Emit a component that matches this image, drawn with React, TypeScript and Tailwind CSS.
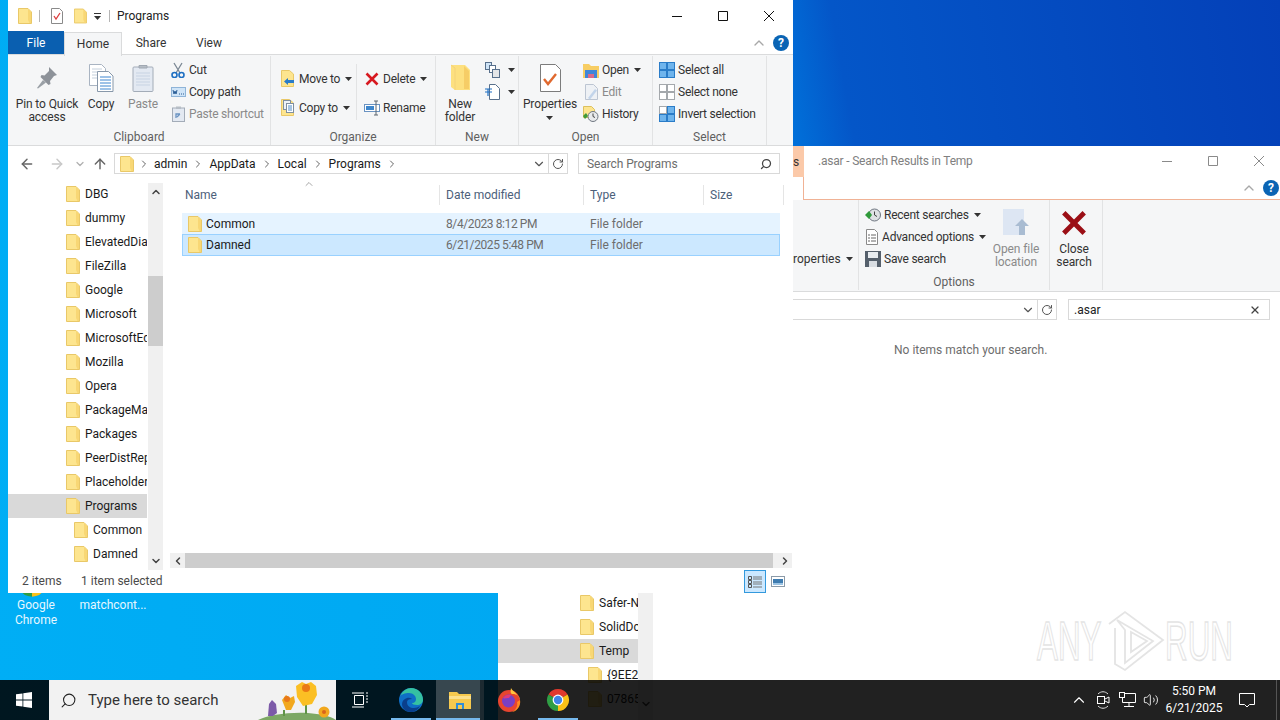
import type { ReactNode } from 'react'
import { ArrowLeft, ArrowRight, ArrowUp, ChevronDown, ChevronRight, ChevronUp, RotateCw, Search, Volume2, X } from 'lucide-react'

const Folder = ({ className = 'w-[14px] h-4' }: { className?: string }) => (
    <svg viewBox="0 0 14 16" className={`shrink-0 ${className}`}>
        <path d="M.5.5h9.5l3.5 3.5v11.5H.5z" fill="#fde58f" stroke="#e9c868" />
        <path d="M10 1l3 3v11h-1.500L10 12z" fill="#f8d775" />
    </svg>
)

const Caret = ({ className = '' }: { className?: string }) => (
    <svg viewBox="0 0 7 4" className={`w-[7px] h-1 shrink-0 ${className}`}>
        <path d="M0 0h7L3.500 4z" fill="#333" />
    </svg>
)

const PinIcon = () => (
    <svg viewBox="0 0 22 24" className="w-[22px] h-6">
        <path d="M13 1l8 8-3 1-4 5 .5 3-2 1-8-8 1-2 3 .5 4.500-4.500z" fill="#8d9299" />
        <path d="M7 14l-6 8 1 .5 8-6z" fill="#9aa0a6" />
    </svg>
)

const CopyIcon = () => (
    <svg viewBox="0 0 25 28" className="w-[25px] h-7">
        <path d="M.5.5h12l4 4v17H.5z" fill="#fff" stroke="#a9b4c2" />
        <path d="M3 5h10M3 8h10M3 11h10M3 14h10" stroke="#c5d0dc" />
        <path d="M8.500 7.500h11l4.500 4.500v15.500H8.500z" fill="#fff" stroke="#8898aa" />
        <path d="M11 13h11M11 16h11M11 19h11M11 22h11M11 25h11" stroke="#3f86d0" />
    </svg>
)

const PasteIcon = () => (
    <svg viewBox="0 0 22 28" className="w-[22px] h-7">
        <rect x="1" y="3" width="20" height="24.500" rx="1" fill="#e3e9f2" stroke="#a3acb8" />
        <path d="M4 9h14M4 12h14M4 15h14M4 18h14M4 21h14" stroke="#c7d3e3" />
        <path d="M7 4h8V1.500h-8z" fill="#b6bdc6" stroke="#a0a8b2" />
    </svg>
)

const ScissorsIcon = () => (
    <svg viewBox="0 0 14 16" className="w-[14px] h-4">
        <path d="M3 1l6 10M11 1L5 11" stroke="#7b8794" strokeWidth="1.300" fill="none" />
        <circle cx="3.500" cy="13" r="2.500" fill="none" stroke="#1e6fc2" strokeWidth="1.600" />
        <circle cx="10.500" cy="13" r="2.500" fill="none" stroke="#1e6fc2" strokeWidth="1.600" />
    </svg>
)

const CopyPathIcon = () => (
    <svg viewBox="0 0 15 10" className="w-[15px] h-[10px]">
        <rect x=".5" y=".5" width="14" height="9" fill="#cfe4f7" stroke="#8fb4d8" />
        <path d="M2 3l1 4 1-3 1 3 1-4" stroke="#2a5d96" fill="none" />
        <path d="M8 7h1M10 7h1M12 7h1" stroke="#2a5d96" />
    </svg>
)

const PasteShortcutIcon = () => (
    <svg viewBox="0 0 13 16" className="w-[13px] h-4">
        <rect x=".5" y="2" width="12" height="13.500" fill="#e3e9f2" stroke="#a3acb8" />
        <rect x="4" y=".5" width="5" height="2.500" fill="#b6bdc6" />
        <path d="M4 12V8h4M8 8l-3 3" stroke="#6a93c2" strokeWidth="1.300" fill="none" />
    </svg>
)

const MoveToIcon = () => (
    <svg viewBox="0 0 14 17" className="w-[14px] h-[17px]">
        <path d="M.5.5h8l4 3.500v12.500H.5z" fill="#fde58f" stroke="#e9c868" />
        <path d="M13 10H7V8l-4 3.500L7 15v-2h6z" fill="#2a7cc8" />
    </svg>
)

const CopyToIcon = () => (
    <svg viewBox="0 0 14 17" className="w-[14px] h-[17px]">
        <path d="M.5.5h8l4 3.500v12.500H.5z" fill="#fde58f" stroke="#e9c868" />
        <rect x="2.500" y="1.500" width="7" height="9" fill="#eef3f8" stroke="#7f8fa0" />
        <rect x="5.500" y="4.500" width="7" height="9" fill="#fff" stroke="#7f8fa0" />
        <path d="M7 7h4M7 9h4M7 11h4" stroke="#4c8ac8" />
    </svg>
)

const RedX = ({ className = 'w-[14px] h-[14px]', color = '#d71920' }: { className?: string; color?: string }) => (
    <svg viewBox="0 0 14 14" className={className}>
        <path d="M1.500 1.500l11 11M12.500 1.500l-11 11" stroke={color} strokeWidth="2.600" />
    </svg>
)

const RenameIcon = () => (
    <svg viewBox="0 0 16 16" className="w-4 h-4">
        <rect x=".5" y="4.500" width="15" height="7" fill="#fff" stroke="#6a93c2" />
        <rect x="2" y="6" width="8" height="4" fill="#3e86cc" />
        <path d="M10 1h4M12 1v14M10 15h4" stroke="#5d6670" fill="none" />
    </svg>
)

const NewFolderIcon = () => (
    <svg viewBox="0 0 21 28" className="w-[21px] h-7">
        <path d="M1 1h14l5 5v20H5l-4-3z" fill="#fde07f" />
        <path d="M14 2l5 5v18h-5z" fill="#f6cd66" />
        <path d="M1 1l4 3v22" fill="none" stroke="#f4d27a" />
    </svg>
)

const NewItemIcon = () => (
    <svg viewBox="0 0 15 16" className="w-[15px] h-4">
        <rect x=".5" y=".5" width="6" height="7" fill="#cfe4f7" stroke="#58708c" />
        <rect x="4.500" y="3.500" width="6" height="7" fill="#fff" stroke="#58708c" />
        <rect x="7.500" y="7.500" width="7" height="8" fill="#e4e6e8" stroke="#58708c" />
    </svg>
)

const EasyAccessIcon = () => (
    <svg viewBox="0 0 15 16" className="w-[15px] h-4">
        <path d="M4.500.5h6l4 4v11h-10z" fill="#fff" stroke="#58708c" />
        <path d="M0 5h7M0 8h7M3 5v7" stroke="#1e6fc2" strokeWidth="1.200" fill="none" />
    </svg>
)

const PropertiesIcon = () => (
    <svg viewBox="0 0 21 28" className="w-[21px] h-7">
        <path d="M.5.5h15l5 5v22H.5z" fill="#fff" stroke="#7c7c7c" />
        <path d="M4 15l4 5 8-10" fill="none" stroke="#e0692f" strokeWidth="2.400" />
    </svg>
)

const TitleDocIcon = () => (
    <svg viewBox="0 0 12 16" className="w-3 h-4 shrink-0">
        <path d="M.5.5h8l3 3v12H.5z" fill="#fff" stroke="#8a8a8a" />
        <path d="M3 8l2 3 4-6" fill="none" stroke="#dc3f3f" strokeWidth="1.300" />
    </svg>
)

const OpenIcon = () => (
    <svg viewBox="0 0 16 15" className="w-4 h-[15px]">
        <path d="M0 1h6l2 2h8v12H0z" fill="#f7cd63" />
        <path d="M2 7h12v8H2z" fill="#3f86d8" />
        <path d="M5 15v-4h6v4z" fill="#d96a8a" />
    </svg>
)

const EditIcon = () => (
    <svg viewBox="0 0 13 16" className="w-[13px] h-4">
        <path d="M.5.5h8l4 4v11H.5z" fill="#eef1f5" stroke="#bcc5d2" />
        <path d="M3 14l7-9 2 1.500-7 9z" fill="#c2d4ea" />
    </svg>
)

const HistoryIcon = () => (
    <svg viewBox="0 0 16 16" className="w-4 h-4">
        <path d="M.5.5h8l3 3v8h-11z" fill="#fde58f" stroke="#dcc05e" />
        <circle cx="10" cy="10.500" r="5" fill="#e8eaec" stroke="#6e7680" />
        <path d="M10 7.500v3l2 1" stroke="#444" fill="none" />
        <path d="M0 10l3-3 2 3-3 3z" fill="#3f9a3a" />
    </svg>
)

const SelectGrid = ({ filled }: { filled: boolean[] }) => (
    <svg viewBox="0 0 16 16" className="w-4 h-4">
        {[0, 1, 2, 3].map((i) => (
            <rect
                key={i}
                x={i % 2 === 0 ? 0.5 : 8.5}
                y={i < 2 ? 0.5 : 8.5}
                width="7"
                height="7"
                fill={filled[i] ? '#6fb4ec' : '#fff'}
                stroke={filled[i] ? '#2a7cc8' : '#a4a8ac'}
            />
        ))}
    </svg>
)

const ViewDetailsIcon = () => (
    <svg viewBox="0 0 16 16" className="w-4 h-4">
        <path d="M1.500 2.500h3v3h-3zM1.500 6.500h3v3h-3zM1.500 10.500h3v3h-3z" fill="none" stroke="#555" />
        <path d="M6 3h9M6 5h9M6 8h9M6 10h9M6 13h9" stroke="#777" />
    </svg>
)

const ViewTilesIcon = () => (
    <svg viewBox="0 0 14 11" className="w-[14px] h-[11px]">
        <rect x=".5" y=".5" width="13" height="10" fill="#fff" stroke="#8b9aa8" />
        <rect x="2" y="3" width="10" height="4" fill="#3f7cb0" />
        <rect x="2" y="7" width="10" height="2" fill="#9cc4e4" />
    </svg>
)

const RecentIcon = () => (
    <svg viewBox="0 0 16 14" className="w-4 h-[14px]">
        <circle cx="9.500" cy="7" r="6" fill="#dfe1e4" stroke="#6e7680" />
        <path d="M9.500 3.500V7l2.500 1.500" stroke="#444" fill="none" />
        <path d="M0 7l4-4 3 4-3 4z" fill="#2f9a3a" />
    </svg>
)

const AdvancedIcon = () => (
    <svg viewBox="0 0 12 16" className="w-3 h-4">
        <path d="M.5.5h8l3 3v12H.5z" fill="#fff" stroke="#8a8a8a" />
        <path d="M2 6h2M5 6h5M2 9h2M5 9h5M2 12h2M5 12h5" stroke="#666" />
    </svg>
)

const SaveIcon = () => (
    <svg viewBox="0 0 16 16" className="w-4 h-4">
        <path d="M0 0h16v16H0z" fill="#55606c" />
        <rect x="3" y="1" width="10" height="6" fill="#e8ecf0" />
        <rect x="4" y="10" width="8" height="6" fill="#d8dde2" />
    </svg>
)

const OpenLocationIcon = () => (
    <svg viewBox="0 0 26 28" className="w-[26px] h-7">
        <path d="M0 0h21v26H0z" fill="#dde6f3" />
        <path d="M19 10l7 7h-4v9h-6v-9h-4z" fill="#a9bcd2" />
    </svg>
)

const WindowsLogo = () => (
    <svg viewBox="0 0 16 16" className="w-4 h-4">
        <path d="M0 2.300L6.500 1.400V7.600H0zM7.300 1.300L16 0V7.600H7.300zM0 8.400H6.500V14.600L0 13.700zM7.300 8.400H16V16L7.300 14.700z" fill="#fff" />
    </svg>
)

const TaskViewIcon = () => (
    <svg viewBox="0 0 16 16" className="w-4 h-4">
        <path d="M2.500 3.500h9v9h-9z" fill="none" stroke="#fff" />
        <path d="M0 1h12M0 15h12M14 1h2M14 4h2M14 7h2M14 10h2" stroke="#fff" />
    </svg>
)

const Flowers = () => (
    <svg viewBox="0 0 78 40" className="absolute right-0 top-0 w-[78px] h-10">
        <path d="M0 40c10-5 30-8 50-7 12 1 22 3 28 7z" fill="#7da864" />
        <path d="M48 24v10M26 30v6" stroke="#5f9447" strokeWidth="2" />
        <path d="M10 36l1-12 3-4 4 4 1 9-4 3z" fill="#7c5aa8" />
        <path d="M24 20l4-5 4 3 4-2 1 6-4 8h-5z" fill="#f2a81d" />
        <path d="M38 6l6-4 4 2 5-2 5 4 1 9-5 9-9 2-6-9z" fill="#fbbf24" />
        <circle cx="48" cy="8" r="4" fill="#ea7a14" />
        <circle cx="29" cy="19" r="3" fill="#e8781a" />
        <circle cx="66" cy="32" r="5.500" fill="#f2a81d" />
        <circle cx="66" cy="32" r="2" fill="#d8641a" />
    </svg>
)

const EdgeIcon = () => (
    <svg viewBox="0 0 24 24" className="w-6 h-6">
        <circle cx="12" cy="12" r="12" fill="#0f6fc6" />
        <path d="M1 9C3 3 8 0 12 0c7 0 12 5 12 12 0 3-3 5-6 5-3 0-5-1-5-2 3 0 4-2 4-4 0-3-3-6-7-6-4 0-8 1-9 4z" fill="#35c1a2" />
        <path d="M8 14c0 4 3 6 7 6 2 0 4-1 6-2-2 4-6 6-9 6C6 24 3 20 3 16c0-3 2-5 5-6 3-1 5 1 5 1-3 0-5 1-5 3z" fill="#0a3f8c" />
    </svg>
)

const ExplorerIcon = () => (
    <svg viewBox="0 0 22 18" className="w-[22px] h-[18px]">
        <path d="M0 1h8l2 2h12v15H0z" fill="#f5c94e" />
        <path d="M0 5h22v3H0z" fill="#fbe08c" />
        <path d="M7 12h8v6H7z" fill="#2f8fd8" />
        <path d="M9 14h4v4H9z" fill="#f5c94e" />
    </svg>
)

const FirefoxIcon = () => (
    <svg viewBox="0 0 24 24" className="w-6 h-6">
        <circle cx="12" cy="13" r="11" fill="#e8452f" />
        <path d="M14 0c1 3 7 5 9 12 0-4-4-6-7-6-2 0-3-1-2-6z" fill="#ffc53d" />
        <path d="M23 12c1 5-2 11-8 12 4-2 6-6 5-10z" fill="#ff8a1f" />
        <circle cx="11.500" cy="13" r="6.500" fill="#7a3fc4" />
        <path d="M6 10c2-3 5-4 8-3l-2 3c-3 0-4 1-6 0z" fill="#e23a7a" />
    </svg>
)

const ChromeIcon = ({ className = 'w-6 h-6' }: { className?: string }) => (
    <svg viewBox="0 0 24 24" className={className}>
        <path d="M12 12L21.530 6.500A11 11 0 0 0 2.470 6.500z" fill="#e0392d" />
        <path d="M12 12L21.530 6.500A11 11 0 0 1 12 23z" fill="#fbc117" />
        <path d="M12 12L12 23A11 11 0 0 1 2.470 6.500z" fill="#2f9e44" />
        <circle cx="12" cy="12" r="5.400" fill="#fff" />
        <circle cx="12" cy="12" r="4.200" fill="#3f84e8" />
    </svg>
)

const WatermarkLogo = () => (
    <svg viewBox="0 0 58 62" className="w-[58px] h-[62px]">
        <g fill="none" stroke="#e4e4e4" strokeWidth="1.800">
            <path d="M2 14L18 2l38 28-38 30-10-6V18" />
            <path d="M10 10l36 21-28 22V20z" />
            <path d="M24 22l16 9-16 11z" />
        </g>
    </svg>
)

const NetworkIcon = () => (
    <svg viewBox="0 0 17 16" className="w-[17px] h-4">
        <path d="M3.500 1.500h13v9h-13zM10 10.500v4M5 14.500h10" fill="none" stroke="#fff" />
        <rect x=".5" y=".5" width="5" height="5" fill="#222" stroke="#fff" />
    </svg>
)

const MeetIcon = () => (
    <svg viewBox="0 0 14 18" className="w-[14px] h-[18px]">
        <path d="M2 3c3-3 7-3 10 0M2 15c3 3 7 3 10 0" fill="none" stroke="#ddd" />
        <rect x="1.500" y="5.500" width="7" height="7" fill="none" stroke="#fff" />
        <path d="M9 8l4-2v6l-4-2" fill="none" stroke="#fff" />
    </svg>
)

const NotificationIcon = () => (
    <svg viewBox="0 0 16 16" className="w-4 h-4">
        <path d="M.5 1.500h15v11h-5l-2.500 2.500-2.500-2.500h-5z" fill="none" stroke="#fff" />
    </svg>
)

const HelpDot = () => (
    <div className="flex h-4 w-4 items-center justify-center rounded-full bg-[#0a64b4] text-[12px] font-bold leading-none text-white">
        ?
    </div>
)

const WindowCtrls = ({ color }: { color: string }) => (
    <div className="flex">
        <div className="flex h-[31px] w-[46px] items-center justify-center">
            <svg viewBox="0 0 10 10" className="w-[10px] h-[10px]"><path d="M0 5.500h10" stroke={color} /></svg>
        </div>
        <div className="flex h-[31px] w-[46px] items-center justify-center">
            <svg viewBox="0 0 10 10" className="w-[10px] h-[10px]"><path d="M.5.500h9v9h-9z" fill="none" stroke={color} /></svg>
        </div>
        <div className="flex h-[31px] w-[46px] items-center justify-center">
            <svg viewBox="0 0 10 10" className="w-[10px] h-[10px]"><path d="M0 0l10 10M10 0L0 10" stroke={color} /></svg>
        </div>
    </div>
)

type GroupProps = { label: string; className: string; children: ReactNode }

const Group = ({ label, className, children }: GroupProps) => (
    <div className={`flex flex-col border-r border-[#e2e3e4] ${className}`}>
        <div className="flex flex-1">{children}</div>
        <div className="h-[16px] text-center leading-[16px] text-[#5f5f5f]">{label}</div>
    </div>
)

type LargeProps = { icon: ReactNode; className: string; muted?: boolean; children: ReactNode }

const LargeButton = ({ icon, className, muted, children }: LargeProps) => (
    <div className={`flex shrink-0 flex-col items-center pt-[8px] ${className}`}>
        <div className="flex h-7 items-center justify-center">{icon}</div>
        <div className={`mt-[6px] text-center leading-[13px] tracking-[-0.1px] ${muted ? 'text-[#8a8a8a]' : 'text-[#333]'}`}>
            {children}
        </div>
    </div>
)

type SmallProps = { icon: ReactNode; label: string; muted?: boolean; caret?: boolean; className?: string }

const SmallButton = ({ icon, label, muted, caret, className = 'h-[22px]' }: SmallProps) => (
    <div className={`flex items-center whitespace-nowrap tracking-[-0.25px] ${className} ${muted ? 'text-[#8a8a8a]' : 'text-[#333]'}`}>
        <div className="flex w-4 justify-center">{icon}</div>
        <span className="ml-[3px]">{label}</span>
        {caret && <Caret className="ml-[5px]" />}
    </div>
)

const Crumb = ({ label }: { label: string }) => (
    <>
        <span className="text-[#1a1a1a]">{label}</span>
        <ChevronRight className="mx-[5px] h-3 w-3 text-[#666]" strokeWidth={2} />
    </>
)

const mainTree = [
    'DBG',
    'dummy',
    'ElevatedDia',
    'FileZilla',
    'Google',
    'Microsoft',
    'MicrosoftEd',
    'Mozilla',
    'Opera',
    'PackageMa',
    'Packages',
    'PeerDistRep',
    'Placeholder',
]

const TreeRow = ({ name, selected, left }: { name: string; selected?: boolean; left: string }) => (
    <div className={`flex h-6 items-center overflow-hidden whitespace-nowrap text-[#1a1a1a] ${left} ${selected ? 'bg-[#d9d9d9]' : ''}`}>
        <Folder />
        <span className="ml-[5px]">{name}</span>
    </div>
)

function MainWindow() {
    return (
        <div className="absolute left-2 top-0 flex h-[593px] w-[785px] flex-col bg-white">
            <div className="flex h-[31px] items-center">
                <Folder className="ml-[10px] w-[14px] h-4" />
                <div className="ml-[7px] h-3 w-px bg-[#b5b5b5]" />
                <div className="ml-[11px]"><TitleDocIcon /></div>
                <Folder className="ml-[11px] w-[13px] h-4" />
                <svg viewBox="0 0 7 7" className="ml-[7px] mt-[2px] w-[7px] h-[7px]">
                    <path d="M0 0h7v1H0zM0 3h7L3.500 7z" fill="#333" />
                </svg>
                <div className="ml-[8px] h-3 w-px bg-[#b5b5b5]" />
                <span className="ml-[7px] text-[#222]">Programs</span>
                <div className="ml-auto mr-px"><WindowCtrls color="#111" /></div>
            </div>
            <div className="flex h-[24px] items-center border-b border-[#dadbdc]">
                <div className="flex h-[23px] w-[56px] items-center justify-center bg-[#0a5fb0] text-white">File</div>
                <div className="relative top-px flex h-[24px] w-[58px] items-center justify-center border-x border-t border-[#dadbdc] bg-[#f5f6f7] text-[#333]">Home</div>
                <div className="flex w-[58px] justify-center text-[#333]">Share</div>
                <div className="flex w-[58px] justify-center text-[#333]">View</div>
                <ChevronUp className="ml-auto h-4 w-4 text-[#a8a8a8]" />
                <div className="ml-[6px] mr-[4px]"><HelpDot /></div>
            </div>
            <div className="flex h-[91px] border-b border-[#dadbdc] bg-[#f5f6f7] pt-px">
                <Group label="Clipboard" className="w-[263px]">
                    <LargeButton icon={<PinIcon />} className="w-[78px]">
                        Pin to Quick
                        <br />
                        access
                    </LargeButton>
                    <LargeButton icon={<CopyIcon />} className="w-[30px]">Copy</LargeButton>
                    <LargeButton icon={<PasteIcon />} className="w-[54px]" muted>Paste</LargeButton>
                    <div className="pt-[3px]">
                        <SmallButton icon={<ScissorsIcon />} label="Cut" />
                        <SmallButton icon={<CopyPathIcon />} label="Copy path" />
                        <SmallButton icon={<PasteShortcutIcon />} label="Paste shortcut" muted />
                    </div>
                </Group>
                <Group label="Organize" className="w-[165px]">
                    <div className="w-[85px] pl-[9px] pt-[8px]">
                        <SmallButton icon={<MoveToIcon />} label="Move to" caret className="h-[29px]" />
                        <SmallButton icon={<CopyToIcon />} label="Copy to" caret className="h-[29px]" />
                    </div>
                    <div className="mt-[8px] h-[56px] w-px bg-[#e2e3e4]" />
                    <div className="pl-[7px] pt-[8px]">
                        <SmallButton icon={<RedX />} label="Delete" caret className="h-[29px]" />
                        <SmallButton icon={<RenameIcon />} label="Rename" className="h-[29px]" />
                    </div>
                </Group>
                <Group label="New" className="w-[83px]">
                    <LargeButton icon={<NewFolderIcon />} className="w-[48px]">
                        New
                        <br />
                        folder
                    </LargeButton>
                    <div className="pt-[3px]">
                        <SmallButton icon={<NewItemIcon />} label="" caret />
                        <SmallButton icon={<EasyAccessIcon />} label="" caret />
                    </div>
                </Group>
                <Group label="Open" className="w-[134px]">
                    <LargeButton icon={<PropertiesIcon />} className="w-[62px]">
                        Properties
                        <Caret className="mx-auto mt-[5px]" />
                    </LargeButton>
                    <div className="pl-[2px] pt-[3px]">
                        <SmallButton icon={<OpenIcon />} label="Open" caret />
                        <SmallButton icon={<EditIcon />} label="Edit" muted />
                        <SmallButton icon={<HistoryIcon />} label="History" />
                    </div>
                </Group>
                <Group label="Select" className="w-[114px]">
                    <div className="pl-[6px] pt-[3px]">
                        <SmallButton icon={<SelectGrid filled={[true, true, true, true]} />} label="Select all" />
                        <SmallButton icon={<SelectGrid filled={[false, false, false, false]} />} label="Select none" />
                        <SmallButton icon={<SelectGrid filled={[false, true, true, true]} />} label="Invert selection" />
                    </div>
                </Group>
            </div>
            <div className="flex h-[37px] items-start pt-[7px]">
                <div className="ml-[7px] flex h-[21px] w-6 items-center justify-center">
                    <ArrowLeft className="h-4 w-4 text-[#666]" strokeWidth={2.2} />
                </div>
                <div className="ml-[6px] flex h-[21px] w-6 items-center justify-center">
                    <ArrowRight className="h-4 w-4 text-[#c8c8c8]" strokeWidth={2.2} />
                </div>
                <div className="ml-[3px] flex h-[21px] w-4 items-center justify-center">
                    <ChevronDown className="h-3 w-3 text-[#b0b0b0]" strokeWidth={2.5} />
                </div>
                <div className="ml-[2px] flex h-[21px] w-5 items-center justify-center">
                    <ArrowUp className="h-4 w-4 text-[#666]" strokeWidth={2.2} />
                </div>
                <div className="ml-[4px] flex h-[21px] w-[454px] items-center border border-[#d9d9d9] pl-[5px]">
                    <Folder />
                    <ChevronRight className="ml-[4px] mr-[4px] h-3 w-3 text-[#666]" strokeWidth={2} />
                    <Crumb label="admin" />
                    <Crumb label="AppData" />
                    <Crumb label="Local" />
                    <Crumb label="Programs" />
                    <ChevronDown className="ml-auto h-[14px] w-[14px] text-[#555]" strokeWidth={2} />
                    <div className="ml-[2px] h-full w-px bg-[#d9d9d9]" />
                    <RotateCw className="mx-[3px] h-3 w-3 text-[#555]" strokeWidth={2} />
                </div>
                <div className="ml-[10px] flex h-[21px] w-[202px] items-center border border-[#d9d9d9] pl-[8px] tracking-[-0.1px] text-[#6d6d6d]">
                    Search Programs
                    <Search className="ml-auto mr-[7px] h-3 w-3 -scale-x-100 text-[#444]" strokeWidth={2.5} />
                </div>
            </div>
            <div className="flex min-h-0 flex-1">
                <div className="mr-px w-[139px] overflow-hidden">
                    <div className="-mt-[1px]">
                        {mainTree.map((name) => (
                            <TreeRow key={name} name={name} left="pl-[58px]" />
                        ))}
                        <TreeRow name="Programs" selected left="pl-[58px]" />
                        <TreeRow name="Common" left="pl-[66px]" />
                        <TreeRow name="Damned" left="pl-[66px]" />
                    </div>
                </div>
                <div className="flex w-[15px] flex-col items-center bg-[#f0f0f0] pt-[3px]">
                    <ChevronUp className="h-3 w-3 text-[#444]" strokeWidth={3} />
                    <div className="mt-[78px] h-[70px] w-full bg-[#cdcdcd]" />
                    <ChevronDown className="mt-auto mb-[3px] h-3 w-3 text-[#444]" strokeWidth={3} />
                </div>
                <div className="flex min-w-0 flex-1 flex-col">
                    <div className="relative flex h-[22px] items-center pt-[2px] text-[#4c607a]">
                        <ChevronUp className="absolute left-[140px] -top-[5px] h-3 w-3 text-[#888]" strokeWidth={1.500} />
                        <div className="flex h-full w-[277px] items-center border-r border-[#e5e5e5] pl-[22px]">Name</div>
                        <div className="flex h-full w-[144px] items-center border-r border-[#e5e5e5] pl-[6px]">Date modified</div>
                        <div className="flex h-full w-[120px] items-center border-r border-[#e5e5e5] pl-[6px]">Type</div>
                        <div className="flex h-full w-[80px] items-center border-r border-[#e5e5e5] pl-[6px]">Size</div>
                    </div>
                    <div className="ml-[19px] mt-[8px] w-[598px] flex-1">
                        <div className="flex h-[21px] items-center bg-[#e5f3ff] pl-[6px]">
                            <Folder />
                            <span className="ml-[4px] w-[240px] text-[#1a1a1a]">Common</span>
                            <span className="w-[144px] tracking-[-0.4px] text-[#6d6d6d]">8/4/2023 8:12 PM</span>
                            <span className="text-[#6d6d6d]">File folder</span>
                        </div>
                        <div className="flex h-[22px] items-center border border-[#99d1ff] bg-[#cce8ff] pl-[5px]">
                            <Folder />
                            <span className="ml-[4px] w-[240px] text-[#1a1a1a]">Damned</span>
                            <span className="w-[144px] tracking-[-0.4px] text-[#6d6d6d]">6/21/2025 5:48 PM</span>
                            <span className="text-[#6d6d6d]">File folder</span>
                        </div>
                    </div>
                    <div className="mb-[2px] ml-[7px] mr-px flex h-[15px] items-center bg-[#f0f0f0]">
                        <div className="flex w-[15px] justify-center">
                            <ChevronRight className="h-3 w-3 rotate-180 text-[#444]" strokeWidth={3} />
                        </div>
                        <div className="h-full w-[588px] bg-[#cdcdcd]" />
                        <div className="ml-auto flex w-[15px] justify-center">
                            <ChevronRight className="h-3 w-3 text-[#444]" strokeWidth={3} />
                        </div>
                    </div>
                </div>
            </div>
            <div className="flex h-[23px] items-center text-[#4a4a4a]">
                <span className="w-[73px] pb-[2px] pl-[14px]">2 items</span>
                <span className="pb-[2px]">1 item selected</span>
                <div className="ml-auto flex h-full items-center">
                    <div className="flex h-[23px] w-[22px] items-center justify-center border border-[#3399dd] bg-[#cce8ff]">
                        <ViewDetailsIcon />
                    </div>
                    <div className="ml-[5px] mr-[8px] flex w-[14px] justify-center">
                        <ViewTilesIcon />
                    </div>
                </div>
            </div>
        </div>
    )
}

function SearchWindow() {
    return (
        <div className="absolute bottom-0 left-[498px] top-[146px] flex w-[782px] bg-white">
            <div className="flex w-[295px] items-start pt-[445px]">
                <div className="w-[140px] overflow-hidden">
                    <TreeRow name="Safer-N" left="pl-[82px]" />
                    <TreeRow name="SolidDc" left="pl-[82px]" />
                    <TreeRow name="Temp" selected left="pl-[82px]" />
                    <TreeRow name="{9EE29" left="pl-[90px]" />
                    <TreeRow name="07865" left="pl-[90px]" />
                </div>
                <div className="mt-[2px] flex h-[127px] w-[15px] items-end justify-center bg-[#f0f0f0] pb-[10px]">
                    <ChevronDown className="h-3 w-3 text-[#444]" strokeWidth={3} />
                </div>
            </div>
            <div className="flex min-w-0 flex-1 flex-col">
                <div className="flex h-[31px] items-start">
                    <div className="flex h-full w-[11px] items-center overflow-hidden bg-[#fbc9a9] text-[#333]">s</div>
                    <span className="ml-[14px] mt-[6px] tracking-[-0.2px] text-[#808080]">.asar - Search Results in Temp</span>
                    <div className="-mr-[2px] -mt-[1px] ml-auto"><WindowCtrls color="#8a8a8a" /></div>
                </div>
                <div className="ml-[10px] flex h-[23px] items-center justify-end border-b border-l border-[#f0b295]">
                    <ChevronUp className="h-4 w-4 text-[#a8a8a8]" />
                    <div className="ml-[6px] mr-px"><HelpDot /></div>
                </div>
                <div className="flex h-[92px] border-b border-[#dadbdc] bg-[#f5f6f7] pb-px">
                    <div className="flex w-[66px] items-start border-r border-[#e2e3e4] pt-[50px] leading-[18px] text-[#333]">
                        <span className="flex items-center">roperties<Caret className="ml-[5px]" /></span>
                    </div>
                    <Group label="Options" className="w-[191px]">
                        <div className="w-[127px] shrink-0 pl-[6px] pt-[4px]">
                            <SmallButton icon={<RecentIcon />} label="Recent searches" caret />
                            <SmallButton icon={<AdvancedIcon />} label="Advanced options" caret />
                            <SmallButton icon={<SaveIcon />} label="Save search" />
                        </div>
                        <LargeButton icon={<OpenLocationIcon />} className="w-[60px] pt-[9px]" muted>
                            Open file
                            <br />
                            location
                        </LargeButton>
                    </Group>
                    <Group label="" className="w-[53px]">
                        <LargeButton icon={<RedX className="h-[26px] w-[26px]" color="#9b0f16" />} className="w-[48px] pt-[9px]">
                            Close
                            <br />
                            search
                        </LargeButton>
                    </Group>
                </div>
                <div className="flex pt-[7px]">
                    <div className="flex h-[21px] w-[264px] items-center justify-end border-y border-r border-[#d9d9d9]">
                        <ChevronDown className="h-[14px] w-[14px] text-[#555]" strokeWidth={2} />
                        <div className="ml-[2px] h-full w-px bg-[#d9d9d9]" />
                        <RotateCw className="mx-[3px] h-3 w-3 text-[#555]" strokeWidth={2} />
                    </div>
                    <div className="ml-[11px] flex h-[21px] w-[202px] items-center border border-[#d9d9d9] pl-[5px] text-[#222]">
                        .asar
                        <X className="ml-auto mr-[8px] h-3 w-3 text-[#444]" strokeWidth={2.5} />
                    </div>
                </div>
                <div className="mt-[22px] pl-[101px] leading-4 text-[#6d6d6d]">No items match your search.</div>
            </div>
            <div className="absolute left-[539px] top-[464px] flex items-center font-['Liberation_Sans',sans-serif]">
                <span className="w-[70px] origin-left scale-x-[.56] text-[56px] leading-none text-transparent [-webkit-text-stroke:1.500px_#e4e4e4]">ANY</span>
                <WatermarkLogo />
                <span className="w-[64px] origin-left scale-x-[.56] text-[56px] leading-none text-transparent [-webkit-text-stroke:1.500px_#e4e4e4]">RUN</span>
            </div>
        </div>
    )
}

function Taskbar() {
    return (
        <div className="absolute bottom-0 left-0 flex h-10 w-[1280px] items-center bg-[rgba(0,0,0,0.87)]">
            <div className="flex h-full w-12 items-center justify-center"><WindowsLogo /></div>
            <div className="relative ml-px flex h-full w-[287px] items-center overflow-hidden bg-[#f2f2f2] pl-[11px] text-[15px] text-[#333]">
                <Search className="h-[17px] w-[17px] -scale-x-100 text-[#222]" strokeWidth={1.500} />
                <span className="ml-[11px]">Type here to search</span>
                <Flowers />
            </div>
            <div className="flex h-full w-12 items-center justify-center"><TaskViewIcon /></div>
            <div className="relative ml-[3px] flex h-full w-12 items-center justify-center">
                <EdgeIcon />
                <div className="absolute bottom-0 left-1 h-[2px] w-10 bg-[#76b9ed]" />
            </div>
            <div className="relative ml-px flex h-full w-[44px] items-center justify-center bg-[#37474f] pl-[3px]">
                <ExplorerIcon />
                <div className="absolute bottom-0 left-0 h-[2px] w-full bg-[#76b9ed]" />
            </div>
            <div className="h-full w-[4px] bg-[#1d2a31]" />
            <div className="ml-px flex h-full w-12 items-center justify-center"><FirefoxIcon /></div>
            <div className="relative ml-px flex h-full w-12 items-center justify-center">
                <ChromeIcon />
                <div className="absolute bottom-0 left-1 h-[2px] w-10 bg-[#76b9ed]" />
            </div>
            <div className="ml-auto flex h-full items-center text-white">
                <div className="flex w-6 justify-center"><ChevronUp className="h-[18px] w-[18px]" strokeWidth={1.500} /></div>
                <div className="flex w-6 justify-center"><MeetIcon /></div>
                <div className="flex w-6 justify-center"><NetworkIcon /></div>
                <div className="flex w-6 justify-center"><Volume2 className="h-4 w-4" strokeWidth={1.300} /></div>
                <div className="w-[62px] text-center leading-[17px]">
                    <div>5:50 PM</div>
                    <div>6/21/2025</div>
                </div>
                <div className="flex w-[44px] justify-center"><NotificationIcon /></div>
                <div className="flex h-full w-[11px] justify-end pr-[3px]"><div className="h-full w-px bg-[#555]" /></div>
            </div>
        </div>
    )
}

export default function App() {
    return (
        <div className="relative h-[720px] w-[1280px] overflow-hidden bg-[linear-gradient(80deg,#00aef5_0%,#00a8f2_40%,#0074dc_63%,#0456c8_68%,#0440b8_100%)] font-['Roboto','Noto_Sans',sans-serif] text-[12px]">
            <div className="absolute left-[16px] top-[566px]"><ChromeIcon className="h-8 w-8" /></div>
            <div className="absolute left-[6px] top-[598px] w-[60px] text-center leading-[15px] text-[#e6f7ff]">
                Google
                <br />
                Chrome
            </div>
            <div className="absolute left-[72px] top-[598px] w-[82px] text-center leading-[15px] text-[#e6f7ff]">matchcont...</div>
            <SearchWindow />
            <MainWindow />
            <Taskbar />
        </div>
    )
}
